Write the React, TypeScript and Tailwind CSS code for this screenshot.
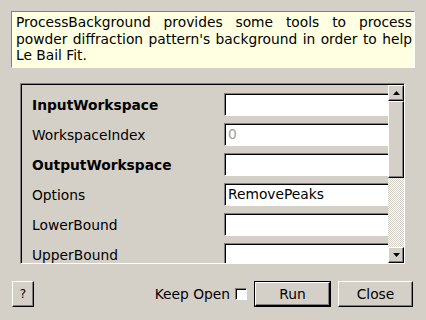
import React from "react";

const rows = [
  { label: "InputWorkspace", bold: true, value: "", placeholder: "" },
  { label: "WorkspaceIndex", bold: false, value: "", placeholder: "0" },
  { label: "OutputWorkspace", bold: true, value: "", placeholder: "" },
  { label: "Options", bold: false, value: "RemovePeaks", placeholder: "" },
  { label: "LowerBound", bold: false, value: "", placeholder: "" },
  { label: "UpperBound", bold: false, value: "", placeholder: "" },
];

const raised =
  "border border-t-white border-l-white border-r-black border-b-black shadow-[inset_-1px_-1px_0_#808080]";

function Arrow({ up }: { up?: boolean }) {
  return (
    <svg width="7" height="4" viewBox="0 0 7 4">
      {up ? <path d="M3.5 0L7 4H0z" fill="#000" /> : <path d="M0 0h7L3.5 4z" fill="#000" />}
    </svg>
  );
}

function Field({ value, placeholder }: { value: string; placeholder: string }) {
  return (
    <div className="h-[23px] w-[190px] shrink-0 border border-t-[#808080] border-l-[#808080] border-r-white border-b-white bg-white shadow-[inset_1px_1px_0_#000] flex items-center pl-[3px] text-[13.8px]">
      {value ? (
        <span className="text-black">{value}</span>
      ) : (
        <span className="text-[#a0a0a0]">{placeholder}</span>
      )}
    </div>
  );
}

export default function App() {
  return (
    <div
      className="w-[426px] h-[320px] bg-[#d4d0c8] flex flex-col overflow-hidden text-black"
      style={{ fontFamily: '"DejaVu Sans", Verdana, sans-serif' }}
    >
      <div className="ml-[11px] mt-[11px] w-[404px] h-[57px] bg-[#ffffe1] border border-t-[#808080] border-l-[#808080] border-r-[#ffffff] border-b-[#ffffff] pl-[4px] pr-[2px] pt-[2px] text-[13.8px] leading-[16.5px] text-justify">
        ProcessBackground provides some tools to process powder diffraction pattern's background in order to help Le Bail Fit.
      </div>

      <div className="ml-[20px] mt-[15px] w-[385px] h-[181px] border border-t-[#808080] border-l-[#808080] border-r-white border-b-white shadow-[inset_1px_1px_0_#000] flex pt-[1px] pl-[1px]">
        <div className="w-[366px] h-[178px] overflow-hidden flex flex-col pt-[4px]">
          {rows.map((r) => (
            <div key={r.label} className="h-[30px] shrink-0 flex items-center">
              <div
                className={`w-[202px] shrink-0 pl-[10px] pt-[3px] text-[13.8px] ${r.bold ? "font-bold" : ""}`}
              >
                {r.label}
              </div>
              <Field value={r.value} placeholder={r.placeholder} />
            </div>
          ))}
        </div>
        <div className="w-[16px] h-[178px] flex flex-col">
          <div className={`h-[16px] w-[16px] shrink-0 bg-[#d4d0c8] flex items-center justify-center ${raised}`}>
            <Arrow up />
          </div>
          <div className={`h-[77px] w-[16px] shrink-0 bg-[#d4d0c8] ${raised}`} />
          <div className="flex-1 bg-[repeating-conic-gradient(#ffffff_0%_25%,#d4d0c8_0%_50%)] bg-[length:2px_2px]" />
          <div className={`h-[16px] w-[16px] shrink-0 bg-[#d4d0c8] flex items-center justify-center ${raised}`}>
            <Arrow />
          </div>
        </div>
      </div>

      <div className="mt-[17px] h-[26px] flex items-center text-[13.8px] pl-[12px] pr-[13px]">
        <button className={`w-[22px] h-[26px] bg-[#d4d0c8] flex items-center justify-center text-[12px] ${raised}`}>
          ?
        </button>
        <span className="ml-auto">Keep Open</span>
        <div className="ml-[5px] w-[12px] h-[12px] bg-white border border-t-[#808080] border-l-[#808080] border-r-white border-b-white shadow-[inset_1px_1px_0_#000]" />
        <div className="ml-[7px] w-[77px] h-[26px] border border-black">
          <button className={`w-full h-full bg-[#d4d0c8] flex items-center justify-center ${raised}`}>
            Run
          </button>
        </div>
        <button className={`ml-[7px] w-[75px] h-[26px] bg-[#d4d0c8] flex items-center justify-center ${raised}`}>
          Close
        </button>
      </div>
    </div>
  );
}
